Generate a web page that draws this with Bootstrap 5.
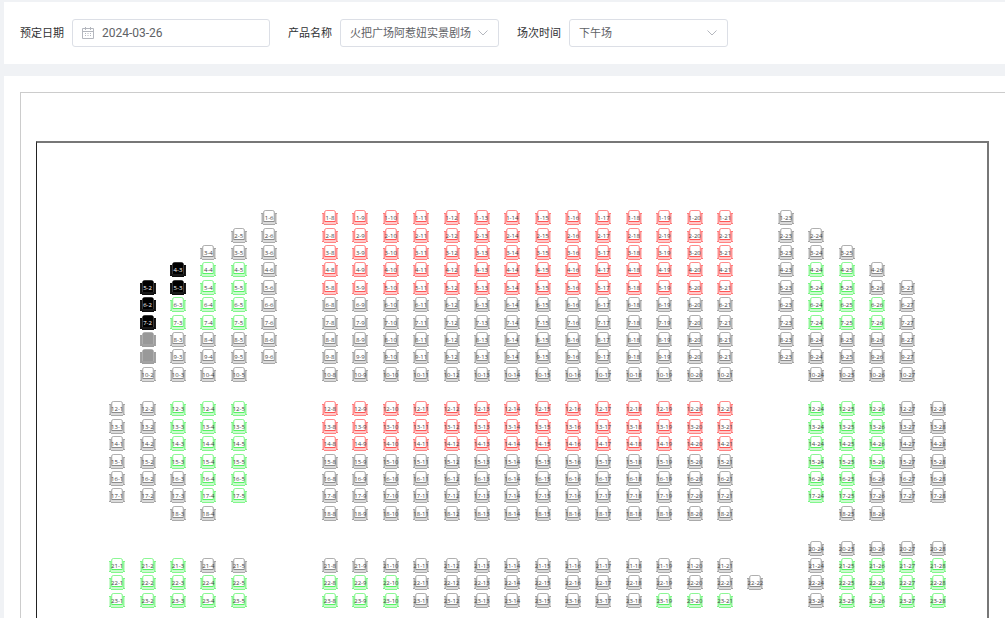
<!DOCTYPE html>
<html lang="zh-CN">
<head>
<meta charset="utf-8">
<meta name="viewport" content="width=device-width, initial-scale=1">
<title>座位预定</title>
<link href="https://cdn.jsdelivr.net/npm/bootstrap@5.3.0/dist/css/bootstrap.min.css" rel="stylesheet">
<style>
  body {
    background: #f0f2f5;
    font-family: "Open Sans", "Noto Sans CJK SC", sans-serif;
    font-size: 11px;
    padding: 2px 0 0 4px;
  }
  .filter-bar { padding: 17px 16px; gap: 18px; }
  .filter-label { color: #303133; margin-right: 8px; font-size: 11px; }
  .filter-control {
    height: 28px;
    padding: 0 9px;
    border: 1px solid #dcdfe6;
    border-radius: 3px;
    color: #606266;
    font-size: 11px;
    line-height: 24px;
  }
  .filter-date { width: 198px; padding-left: 29px; font-family: Roboto, sans-serif; font-size: 12px; }
  .filter-select { width: 159px; background-image: none; }
  .filter-icon { top: 50%; transform: translateY(-50%); pointer-events: none; fill: none; stroke: #b4b7be; }
  .filter-icon.at-start { left: 10px; }
  .filter-icon.at-end { right: 11px; }

  .seat-panel { margin-top: 12px; padding: 16px 0 0 16px; }
  .seat-canvas { border: 1px solid #ccc; border-right: 0; border-bottom: 0; padding: 48px 16px 48px 15px; }
  .stage { border: 2px solid #777; border-left: 1px solid #222; padding: 66px 34px 66px 65px; }
  .seat-map {
    display: grid;
    grid-template-columns: repeat(28, minmax(0, 1fr));
    grid-template-rows: repeat(23, minmax(0, 1fr));
    aspect-ratio: 851 / 400;
    place-items: center;
  }
  .seat { width: 16px; height: 15px; color: #6e6e6e; --seat-fill: #fff; --seat-text: #444; --arm-opacity: .25; }
  .seat svg { width: 16px; height: 15px; }
  .seat-free { color: #2cf03c; }
  .seat-sold { color: #ff2a2a; }
  .seat-locked { color: #000; --seat-fill: #000; --seat-text: #fff; --arm-opacity: .9; }
  .seat-closed { color: #999; --seat-fill: #999; --arm-opacity: .9; }
  .seat-no {
    inset: 1px 0 0 0;
    font-size: 6px;
    line-height: 15px;
    color: var(--seat-text);
    white-space: nowrap;
  }
</style>
</head>
<body class="vh-100 overflow-hidden d-flex flex-column">

<svg class="d-none" aria-hidden="true">
  <symbol id="seat-shape" viewBox="0 0 16 15">
    <path d="M2.500 12V2.500q0-2 2-2h7q2 0 2 2V12" fill="var(--seat-fill)" stroke="currentColor" stroke-opacity=".55"/>
    <path d="M0 3h2v9h12V3h2v11h-2v1H2v-1H0z" fill="currentColor" fill-opacity="var(--arm-opacity)" style="fill-opacity: var(--arm-opacity)"/>
    <g stroke="currentColor" fill="none">
      <path d="M0 3.500h2M14 3.500h2M0 13.500h2M14 13.500h2" stroke-opacity=".5"/>
      <path d="M1.500 4v9M14.500 4v9" stroke-opacity=".35"/>
      <path d="M3.500 2v9M12.500 2v9" stroke-opacity=".15"/>
      <path d="M3 11.500h10" stroke-opacity=".8"/>
      <path d="M2 14.500h12" stroke-opacity=".45"/>
    </g>
  </symbol>
</svg>

<form class="filter-bar bg-white d-flex align-items-center flex-shrink-0">
  <div class="d-flex align-items-center">
    <label class="filter-label" for="bookDate">预定日期</label>
    <div class="position-relative">
      <input class="form-control filter-control filter-date" id="bookDate" type="text" value="2024-03-26">
      <svg class="filter-icon at-start position-absolute" width="12" height="12" viewBox="0 0 12 12" aria-hidden="true">
        <path d="M.5 1.500h11v10H.5zM.5 4.500h11M3.500 0v3M8.500 0v3"/>
        <path d="M3 6.500h6M3 8.500h6" stroke-dasharray="1 1.500"/>
      </svg>
    </div>
  </div>
  <div class="d-flex align-items-center">
    <label class="filter-label" for="product">产品名称</label>
    <div class="position-relative">
      <select class="form-select filter-control filter-select" id="product"><option>火把广场阿惹妞实景剧场</option></select>
      <svg class="filter-icon at-end position-absolute" width="10" height="6" viewBox="0 0 10 6" aria-hidden="true"><path d="M.5.5 5 5 9.500.5"/></svg>
    </div>
  </div>
  <div class="d-flex align-items-center">
    <label class="filter-label" for="session">场次时间</label>
    <div class="position-relative">
      <select class="form-select filter-control filter-select" id="session"><option>下午场</option></select>
      <svg class="filter-icon at-end position-absolute" width="10" height="6" viewBox="0 0 10 6" aria-hidden="true"><path d="M.5.5 5 5 9.500.5"/></svg>
    </div>
  </div>
</form>

<main class="seat-panel bg-white flex-grow-1 overflow-hidden">
  <div class="seat-canvas">
    <div class="stage">
      <div class="seat-map" id="seatMap"></div>
    </div>
  </div>
</main>

<script src="https://cdn.jsdelivr.net/npm/bootstrap@5.3.0/dist/js/bootstrap.bundle.min.js"></script>
<script>
  // One string per row, one character per seat column; "." is an aisle.
  const plan = {
    1:  '.....n.rrrrrrrrrrrrrr.n.....',
    2:  '....nn.rrrrrrrrrrrrrr.nn....',
    3:  '...nnn.rrrrrrrrrrrrrr.nnn...',
    4:  '..kggn.rrrrrrrrrrrrrr.nggn..',
    5:  '.kkggn.rrrrrrrrrrrrrr.nggnn.',
    6:  '.kgggn.nnnnnnnnnnnnnn.ngggn.',
    7:  '.kgggn.nnnnnnnnnnnnnn.ngggn.',
    8:  '.xnnnn.nnnnnnnnnnnnnn.nnnnn.',
    9:  '.xnnnn.nnnnnnnnnnnnnn.nnnnn.',
    10: '.nnnn..nnnnnnnnnnnnnn..nnnn.',
    12: 'nnggg..rrrrrrrrrrrrrr..gggnn',
    13: 'nnggg..rrrrrrrrrrrrrr..gggnn',
    14: 'nnggg..rrrrrrrrrrrrrr..gggnn',
    15: 'nnggg..nnnnnnnnnnnnnn..gggnn',
    16: 'nnngg..nnnnnnnnnnnnnn..ggnnn',
    17: 'nnngg..nnnnnnnnnnnnnn..ggnnn',
    18: '..nn...nnnnnnnnnnnnnn...nn..',
    20: '.......................nnnnn',
    21: 'gggnn..nnnnnnnnnnnnnn..ngggg',
    22: 'ggggg..gggnnnnnnnnnnnn.ngggg',
    23: 'ggggg..gggnnnnnnnnggg..ngggg'
  };
  const status = { n: 'seat-plain', g: 'seat-free', r: 'seat-sold', k: 'seat-locked', x: 'seat-closed' };
  const map = document.getElementById('seatMap');
  for (const [row, seats] of Object.entries(plan)) {
    [...seats].forEach((code, i) => {
      if (code === '.') return;
      const seat = document.createElement('button');
      seat.type = 'button';
      seat.className = `seat ${status[code]} btn p-0 border-0 rounded-0 d-block position-relative`;
      seat.style.gridArea = `${row} / ${i + 1}`;
      seat.setAttribute('aria-label', `${row}-${i + 1}`);
      const label = code === 'x' ? '' : `<span class="seat-no position-absolute d-flex justify-content-center">${row}-${i + 1}</span>`;
      seat.innerHTML = `<svg class="d-block" aria-hidden="true"><use href="#seat-shape"/></svg>${label}`;
      map.append(seat);
    });
  }
</script>
</body>
</html>
